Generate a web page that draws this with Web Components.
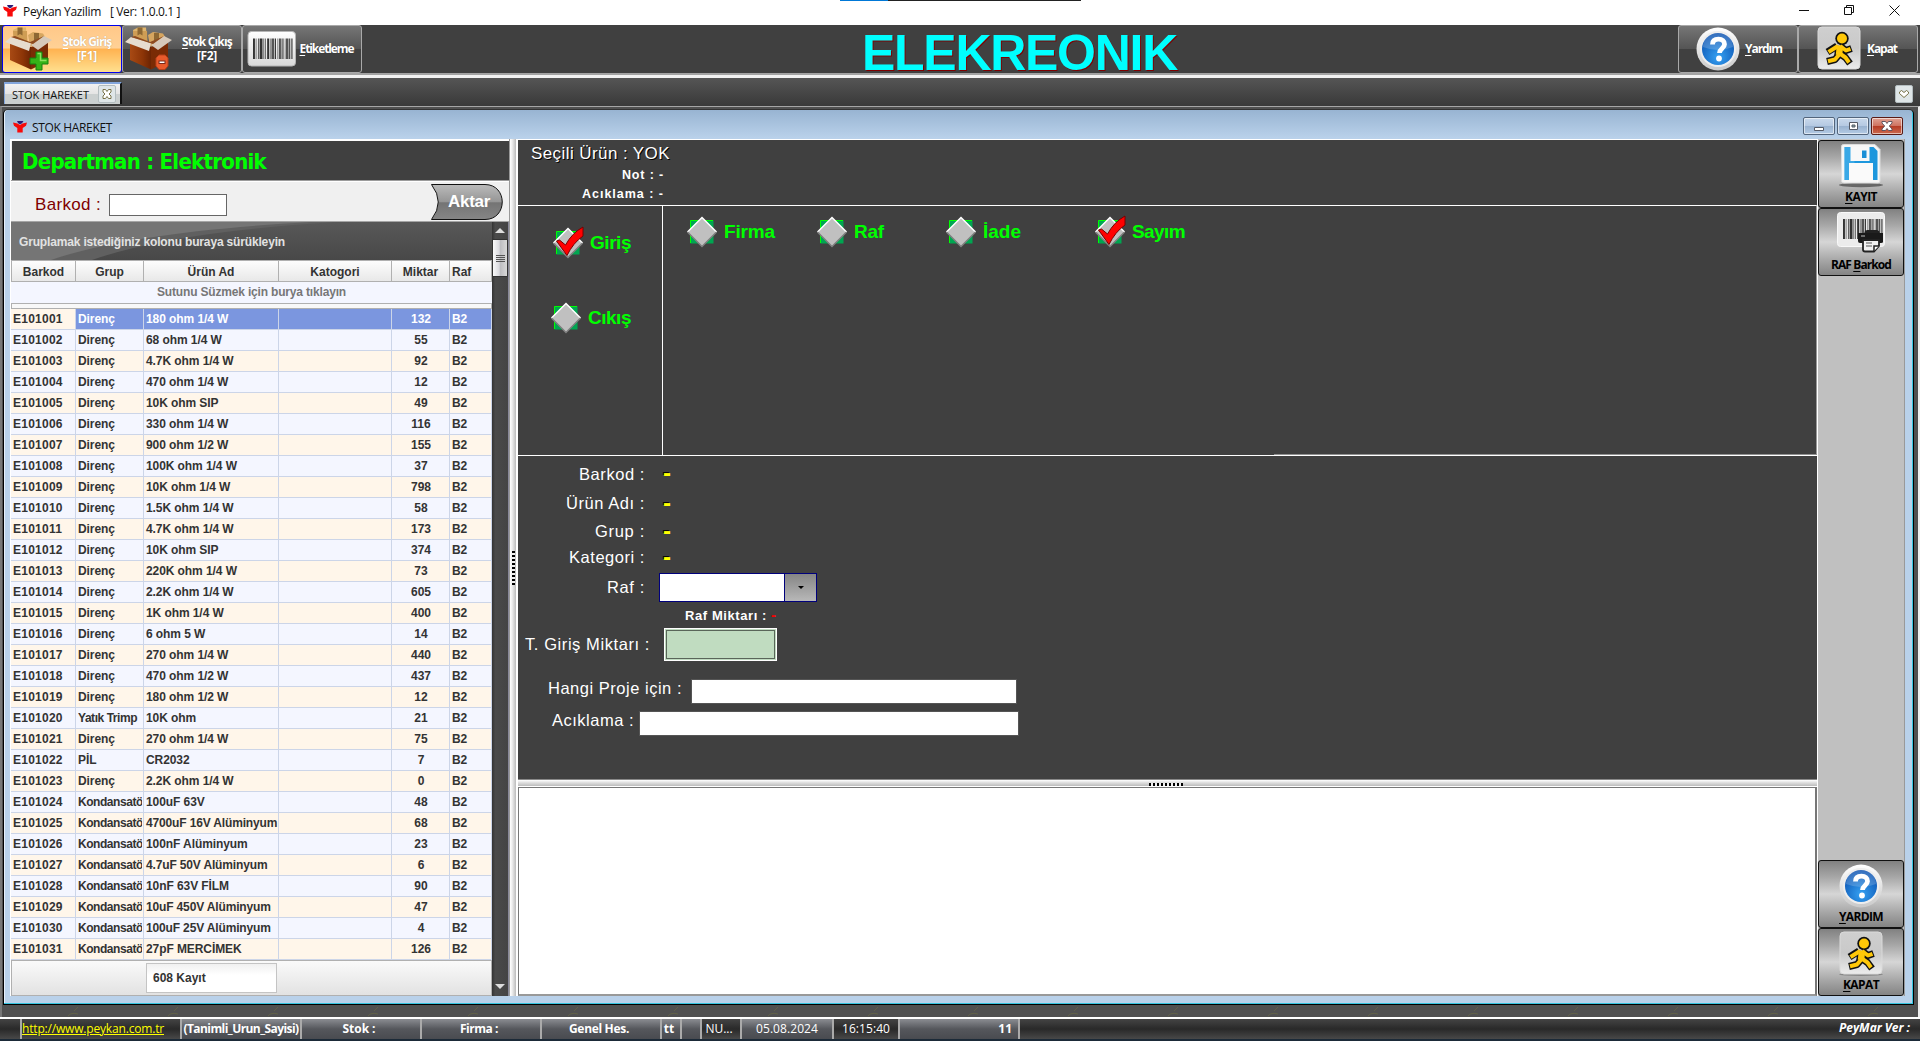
<!DOCTYPE html>
<html lang="tr">
<head>
<meta charset="utf-8">
<title>Peykan Yazilim</title>
<style>html,body{margin:0;padding:0;background:#fff;overflow:hidden}</style>
</head>
<body>
<stock-app></stock-app>
<script>
const fits = [];
function define(name, markup, init) {
  const tpl = document.createElement('template');
  tpl.innerHTML = '<style>*{box-sizing:border-box}:host{box-sizing:border-box}</style>' + markup;
  customElements.define(name, class extends HTMLElement {
    constructor() {
      super();
      this.attachShadow({ mode: 'open' }).appendChild(tpl.content.cloneNode(true));
    }
    connectedCallback() { if (init && !this.ready) { this.ready = true; init(this, this.shadowRoot); } }
  });
}

/* Text run spaced to a given width */
define('fit-text', `<style>:host{display:inline-block;white-space:pre;flex:none}::slotted(u){text-underline-offset:2px}</style><slot></slot>`,
  el => fits.push(el));

/* Icons */
const box = (badge) => `<svg width="48" height="44" viewBox="0 0 48 44">
<defs><linearGradient id="bx" x2="1" y2="0"><stop offset="0" stop-color="#a84a14"/><stop offset=".6" stop-color="#8d3507"/><stop offset="1" stop-color="#6b2403"/></linearGradient></defs>
<path d="M8 3l5-2.500 8 0 1 13-12 2z" fill="#dfb56e"/><path d="M8 4l14 0 .5 11-14 0z" fill="#cf9d54"/><path d="M12.500 .5h5v8l-2.500-1.500-2.500 1.500z" fill="#8e6833"/>
<path d="M23 8l5-3 10 1.500 3 5-1 7-15 1z" fill="#d6a660"/><path d="M29 6h5v8l-2.500-1.500-2.500 1.500z" fill="#8e6833"/>
<path d="M5 15l21 5v22.500L5 33z" fill="url(#bx)"/><path d="M26 20l17-5v19L26 42.500z" fill="#7a2b05"/>
<path d="M6 10l20 6 -2 8L0 15z" fill="#e6dccf"/><path d="M26 18l13-9 8 4-14 10z" fill="#d6c9ba"/><path d="M6 10l4-1 15 6 14-6-11 8z" fill="#8c4a20"/>${badge}</svg>`;
const bars = (x, y, h, s) => { let o = '', w = [2,1,1,3,1,1,2,1,3,1,1,2,1,1,3,1,2], p = x;
  w.forEach((k, i) => { o += `<rect x="${p}" y="${y}" width="${k*s}" height="${h}" fill="${['#333','#777','#555'][i%3]}"/>`; p += (k + (i%4==1?1.400:.7)) * s; }); return o; };
const ICONS = {
  boxadd: box('<path d="M31 25.500h6v6h6v6h-6v6h-6v-6h-6v-6h6z" transform="translate(0,-.5)" fill="#35b318" stroke="#168010"/><path d="M32.500 26.500h3v7h6" fill="none" stroke="#8de05f" stroke-width="1.500"/>'),
  boxdel: box('<path d="M34 28h6l3 3v8l-3 3.500h-6L31 39v-8z" fill="#e85a2b" stroke="#b7401b"/><path d="M33.500 33.500h7v3.500h-7z" fill="#7b2a1c"/><path d="M34.500 34.500h5v1.500h-5z" fill="#fff"/>'),
  barcode: `<svg width="50" height="38" viewBox="0 0 50 38"><defs><linearGradient id="g" x2="0" y2="1"><stop stop-color="#fff"/><stop offset="1" stop-color="#d9d9d9"/></linearGradient></defs><rect x="1" y="1.500" width="47.500" height="34.500" rx="3.500" fill="url(#g)" stroke="#b5b5b5"/>${bars(6,8.500,20.500,.97)}</svg>`,
  help: `<svg width="44" height="44" viewBox="0 0 44 44"><defs><linearGradient id="r" x2="0" y2="1"><stop stop-color="#fff"/><stop offset="1" stop-color="#c9c9c9"/></linearGradient><radialGradient id="h" cx=".5" cy=".75" r=".75"><stop stop-color="#35a1f2"/><stop offset="1" stop-color="#0a4fae"/></radialGradient></defs><circle cx="22" cy="22" r="21.500" fill="url(#r)"/><circle cx="22" cy="22" r="18" fill="#eee"/><circle cx="22" cy="22" r="16" fill="url(#h)"/><path d="M7 20a15 14.500 0 0 1 30 0q-15 6-30 0" fill="#fff" opacity=".18"/><path d="M16.500 17.500c0-4 2.500-5.300 6-5.300 3.800 0 6 2 6 5.100 0 4.300-5 4.200-5 8.700" fill="none" stroke="#fff" stroke-width="4.800"/><circle cx="23" cy="31.500" r="2.900" fill="#fff"/></svg>`,
  run: `<svg width="46" height="46" viewBox="0 0 46 46"><defs><linearGradient id="q" x2="0" y2="1"><stop stop-color="#cfcfcf"/><stop offset=".5" stop-color="#c9c9c9"/><stop offset="1" stop-color="#ececec"/></linearGradient></defs><ellipse cx="23" cy="43.500" rx="22" ry="1.500" fill="#000" opacity=".25"/><rect x="2" y="1" width="42" height="42" rx="4" fill="url(#q)" stroke="#dadada"/>
<g stroke-linejoin="round"><path d="M21 20L11.500 26M24 20l6 4.500 5.500-2M24.500 27l-5.500 6.500-8 2M23 27l6.500 4.500 4.500 6" fill="none" stroke="#111" stroke-width="7"/><path d="M24 20l-1 10" stroke="#111" stroke-width="9.500"/><circle cx="26" cy="12.500" r="6.700" fill="#111"/><path d="M22 20L12.500 26M24 20l6 4.500 4.500-1.700M24.500 27l-5.500 6.500-7 1.800M23 27l6.500 4.500 3.500 5" fill="none" stroke="#ffc808" stroke-width="4"/><path d="M24 19.500l-1 9.500" stroke="#ffc808" stroke-width="6.500"/><circle cx="26" cy="12.500" r="5" fill="#ffc808"/></g></svg>`,
  save: `<svg width="46" height="46" viewBox="0 0 46 46"><ellipse cx="23" cy="42" rx="22" ry="2.200" fill="#222" opacity=".55"/><path d="M3.500 3.500Q3.500 1.500 5.500 1.500H37l5 5V38q0 2-2 2H6q-2.500 0-2.500-2z" fill="#f6f6f6" stroke="#ddd"/><path d="M6.500 4h29l4 4v29h-33z" fill="#1d97dd"/><path d="M6.500 4h10v33h-10z" fill="#55b9ef" opacity=".5"/><path d="M12.500 4h19v14h-19z" fill="#f8f8f8"/><path d="M24 7.500h4.500v7.500H24z" fill="#1a8fd6"/><path d="M11 20h24v17.500H11z" fill="#fafafa"/></svg>`,
  print: `<svg width="48" height="42" viewBox="0 0 48 42"><rect x=".5" y=".5" width="47" height="34" rx="3" fill="#ececec" stroke="#f8f8f8"/>${bars(6,7,20,.97)}<path d="M28 19l2-1h10l2 1 1 3h-16z" fill="#222"/><path d="M21 21h25v9q0 1-2 1H23q-2 0-2-2z" fill="#1a1a1a"/><path d="M24 24h4" stroke="#888" stroke-width="1.500"/><path d="M26 28h16v6l-5 5.500H28q-2 0-2-2z" fill="#f2f2f2" stroke="#222" stroke-width="1.800"/><path d="M29 31h6M29 34h6" stroke="#555"/><path d="M37 39v-5h5" fill="#fff" stroke="#222" stroke-width="1.500"/></svg>`
};
define('app-icon', `<style>:host{display:block;flex:none;line-height:0}</style><span></span>`, (el, r) => r.querySelector('span').innerHTML = ICONS[el.getAttribute('name')]);

define('brand-mark', `<style>:host{display:block;flex:none;line-height:0}</style>
<svg width="14" height="12" viewBox="0 0 14 12"><path d="M0 1.500l4.500 1 2.500 1.500 2.500-1.500L14 1.500l-1 3.300-3.300 2.200V11.500H4.300V7L1 4.800z" fill="#f80a0a"/><path d="M4 0h6.500L9 2.200 7 3.300 5.200 2.200z" fill="#2b1b78"/></svg>`);

define('title-bar', `<style>
:host{display:flex;height:25px;background:#fff;flex-direction:column;font:12px "Open Sans",sans-serif;color:#111}
.t{height:1px;display:flex;padding-left:840px}.t i{width:48px;background:#0078d7}.t b{width:193px;background:#222}
.r{flex:1;display:flex;align-items:flex-start;padding-left:3px;position:relative}
brand-mark{margin-top:4px}.x{margin:2px 0 0 6px;line-height:18px}.v{margin:2px 0 0 9px;line-height:18px}
svg{margin-left:auto}</style>
<div class="t"><i></i><b></b></div><div class="r"><brand-mark></brand-mark><fit-text class="x" w="78">Peykan Yazilim</fit-text><fit-text class="v" w="70">[ Ver: 1.0.0.1 ]</fit-text>
<svg width="122" height="22" fill="none" stroke="#111"><path d="M1 9.500h10M46.500 6.500h7v7h-7zM48.500 6.500v-2h7v7h-2M91.500 4.500l10 10M101.500 4.500l-10 10"/></svg></div>`);

define('tool-button', `<style>
:host{display:flex;align-items:center;width:120px;height:48px;border:1px solid #a9a9a9;border-radius:3px;background:linear-gradient(#767676,#555 49%,#404040 50%,#404040);color:#fff;font:bold 12px/14px "Open Sans",sans-serif;text-shadow:0 0 1px #0005}
:host([active]){border-color:#00e;background:linear-gradient(#ffc888,#ffd196 48%,#ffb250 50%,#ffe08f)}
.l{flex:1;text-align:center;line-height:14px}</style><slot name="icon"></slot><div class="l"><slot></slot></div>`);

define('tool-bar', `<style>
:host{display:flex;height:53px;background:#404040;border-bottom:3px solid #f2f2f2;padding:0 2px;box-shadow:inset 0 -2px #a3a3a3}
h1{margin:0;flex:1;font:bold 50px/50px "Liberation Sans",sans-serif;color:#0ff;text-shadow:1px 1px #800000;padding:3px 0 0 500px;height:48px}
.a{margin-left:2px}.b{margin-left:4px}.c{margin-left:6px}.d{margin-left:17px}tool-button{flex:none}</style>
<tool-button active><app-icon class="a" slot="icon" name="boxadd"></app-icon><fit-text w="49"><u>S</u>tok Giriş</fit-text><br><fit-text w="20">[F1]</fit-text></tool-button>
<tool-button><app-icon class="a" slot="icon" name="boxdel"></app-icon><fit-text w="50"><u>S</u>tok Çıkış</fit-text><br><fit-text w="20">[F2]</fit-text></tool-button>
<tool-button><app-icon class="b" slot="icon" name="barcode"></app-icon><fit-text w="54" style="margin-right:5px"><u>E</u>tiketleme</fit-text></tool-button>
<h1><fit-text w="315">ELEKREONIK</fit-text></h1>
<tool-button><app-icon class="d" slot="icon" name="help"></app-icon><fit-text w="37" style="margin-right:10px"><u>Y</u>ardım</fit-text></tool-button>
<tool-button><app-icon class="d" slot="icon" name="run"></app-icon><fit-text w="30" style="margin-right:15px"><u>K</u>apat</fit-text></tool-button>`);

define('mini-button', `<style>:host{display:flex;width:18px;height:18px;flex:none;border:1px solid #b3bdc0;border-radius:2px;background:#dfe6e8;align-items:center;justify-content:center}svg{display:block}</style>
<svg width="12" height="12" fill="#fff" stroke="#6b6437" stroke-width=".9"><path/></svg>`, (el, r) => r.querySelector('path').setAttribute('d', el.hasAttribute('close') ? 'M2 1.500h2.500L6 3.500l1.500-2H10V4L8 6l2 2v2.500H7.500L6 8.500l-1.500 2H2V8l2-2-2-2z' : 'M1.500 4l2-1.500L6 4.500l2.500-2 2 1.500v1.500L6 9.500 1.500 5.500z'));

define('tab-strip', `<style>
:host{display:flex;height:28px;background:linear-gradient(#555,#393939);align-items:flex-start;justify-content:space-between;padding:4px 7px 0 4px}
.tab{display:flex;align-items:center;width:118px;height:22px;border:1px solid #83a6dc;border-right:2px solid #111;border-bottom:0;border-top-width:2px;background:linear-gradient(#f2f2f2,#e4e4e4 50%,#cbd0d0 52%,#cbd0d0);padding:1px 4px 1px 7px;justify-content:space-between;font:11px "Open Sans",sans-serif;color:#111}
.m{margin-top:3px}</style>
<div class="tab"><fit-text w="77">STOK HAREKET</fit-text><mini-button close></mini-button></div><mini-button class="m"></mini-button>`);

define('window-buttons', `<style>:host{display:flex;gap:2px}
i{width:32px;height:18px;border:1px solid #53657c;border-radius:2px;background:linear-gradient(#c9d9ec,#b5c9e2 48%,#98b1cf 50%,#b4cbe5);box-shadow:inset 0 0 0 1px #ffffff90;display:flex;align-items:center;justify-content:center}
i.x{border-color:#5a1a14;background:linear-gradient(#e0a294,#cf7361 48%,#b53a24 50%,#cc6a50)}</style>
<i><svg width="12" height="12"><path d="M1.500 7.500h9v3h-9z" fill="#fff" stroke="#555a66"/></svg></i>
<i><svg width="12" height="12"><path d="M2.500 2.500h8v7h-8z" fill="#fff" stroke="#555a66"/><path d="M5 5h3v2H5z" fill="#8aa" stroke="#555a66"/></svg></i>
<i class="x"><svg width="14" height="12"><path d="M2 1.500h3.500L7 3.500l1.500-2H12V3L9.300 6 12 9v1.500H8.500L7 8.500l-1.500 2H2V9l2.700-3L2 3z" fill="#fff" stroke="#554c58" stroke-width=".9"/></svg></i>`);

const PRODUCTS = ['180 ohm 1/4 W|132','68 ohm 1/4 W|55','4.7K ohm 1/4 W|92','470 ohm 1/4 W|12','10K ohm SIP|49','330 ohm 1/4 W|116','900 ohm 1/2 W|155','100K ohm 1/4 W|37','10K ohm 1/4 W|798','1.5K ohm 1/4 W|58','4.7K ohm 1/4 W|173','10K ohm SIP|374','220K ohm 1/4 W|73','2.2K ohm 1/4 W|605','1K ohm 1/4 W|400','6 ohm 5 W|14','270 ohm 1/4 W|440','470 ohm 1/2 W|437','180 ohm 1/2 W|12','10K ohm|21|Yatık Trimp','270 ohm 1/4 W|75','CR2032|7|PİL','2.2K ohm 1/4 W|0','100uF 63V|48|K','4700uF 16V Alüminyum|68|K','100nF Alüminyum|23|K','4.7uF 50V Alüminyum|6|K','10nF 63V FİLM|90|K','10uF 450V Alüminyum|47|K','100uF 25V Alüminyum|4|K','27pF MERCİMEK|126|K'];

define('product-grid', `<style>
:host{display:flex;height:775px;border-top:1px solid #a5a5a5;font:bold 12px "Liberation Sans",sans-serif;color:#333}
.main{width:481px;flex:none}
.grp{height:38px;line-height:40px;padding-left:8px;color:#e2e2e2;background:linear-gradient(#585858,#484848);display:grid;justify-items:start}
.grp>*{grid-area:1/1}.grp svg{margin-left:-8px}
.row{display:grid;grid-template-columns:65px 68px 135px 113px 58px 42px;height:21px}
.row>*{border-right:1px solid #ccd5e8;border-bottom:1px solid #ccd5e8;line-height:21px;padding:0 1px 0 2px;overflow:hidden;white-space:pre;letter-spacing:-.08px}
.row>:first-child{padding-left:2px;letter-spacing:.25px}
.row>:nth-child(2)>span{display:block;overflow:hidden}.row .k{letter-spacing:-.45px}
.row>:nth-child(5){text-align:center;padding-left:2px;letter-spacing:0}
.row:nth-child(even)>*{background:#f4f6ff}.row:nth-child(odd)>*{background:#fff6ea}
.row.sel>*{background:#7b96df;color:#fff}.row.sel>:first-child{background:#fff6ea;color:#333}
.head{height:22px;border-top:1px solid #b0b0b0;border-left:1px solid #b0b0b0;grid-template-columns:64px 68px 135px 113px 58px 42px}
.head>*,.head>:first-child{background:linear-gradient(#fdfdfd,#e8e8e8)!important;text-align:center;border-color:#b0b0b0;line-height:22px;letter-spacing:0;padding:0 2px}.head>:last-child{text-align:left;padding-left:2px}
.filter{height:21px;background:#f4f6ff;color:#777;text-align:center;line-height:21px}
.sep{height:6px;border:1px solid #b0b0b0;background:#f8f8f8}
.foot{height:36px;border:1px solid #b0b0b0;background:linear-gradient(#fafafa,#e2e2e2);padding:2px 0 0 134px}
.foot div{width:131px;height:30px;border:1px solid #c4c4c4;background:linear-gradient(#f0f0f0,#fff 40%);padding-left:6px;line-height:29px}
.bar{width:18px;background:linear-gradient(90deg,#333,#4a4a4a 20%,#444);display:flex;flex-direction:column;align-items:center;border-right:1px solid #889}
.up,.dn{width:0;height:0;border:5px solid transparent}.up{border-bottom-color:#ddd;margin-top:1px}.dn{border-top-color:#ddd;margin:auto 0 2px}
.thumb{margin-top:6px;width:16px;height:38px;border:1px solid #333;border-radius:1px;background:linear-gradient(90deg,#fafafa,#d9d9de 45%,#bcbcc0 50%,#d8d8d8);display:flex;flex-direction:column;gap:1px;align-items:center;justify-content:center}
.thumb i{width:9px;height:1px;background:#555}</style>
<div class="main"><div class="grp"><svg width="481" height="38"><path d="M0 0H325Q160 10 81 38H0z" fill="#606060"/><path d="M0 0H300Q120 10 40 38H0z" fill="#757575"/></svg><fit-text w="266">Gruplamak istediğiniz kolonu buraya sürükleyin</fit-text></div>
<div class="row head"><span>Barkod</span><span>Grup</span><span>Ürün Ad</span><span>Katogori</span><span>Miktar</span><span>Raf</span></div>
<div class="filter"><fit-text w="189">Sutunu Süzmek için burya tıklayın</fit-text></div><div class="sep"></div><div class="rows"></div>
<div class="foot"><div>608 Kayıt</div></div></div>
<div class="bar"><div class="up"></div><div class="thumb"><i></i><i></i><i></i><i></i></div><div class="dn"></div></div>`, (el, r) => {
  r.querySelector('.rows').innerHTML = PRODUCTS.map((p, i) => {
    let [name, qty, g = 'Direnç'] = p.split('|'); if (g === 'K') g = 'Kondansatö';
    return `<div class="row${i ? '' : ' sel'}"><span>E1010${String(i + 1).padStart(2, '0')}</span><span><span class="${g.length > 8 ? 'k' : ''}">${g}</span></span><span${name.length > 18 ? ' style="letter-spacing:-.15px"' : ''}>${name}</span><span></span><span>${qty}</span><span>B2</span></div>`;
  }).join('');
});

define('stock-list', `<style>
:host{display:flex;flex-direction:column;width:499px;flex:none;border-left:1px solid #fff;border-top:2px solid #fff;background:#f0f0f0}
.dep{height:39px;background:#404040;color:#0f0;font:bold 22px/42px "DejaVu Sans Condensed","DejaVu Sans",sans-serif;font-stretch:condensed;padding-left:10px;margin-left:1px}
.scan{height:41px;border-top:1px solid #9c9c9c;box-shadow:inset 0 1px #fff;display:flex;align-items:center;padding:8px 6px 0 24px;font:17px "Liberation Sans",sans-serif;color:#800000}
.in{width:118px;height:22px;border:1px solid #666;background:#fff;margin-left:8px}
.btn{margin:-7px 0 0 auto;display:grid;place-items:center;width:72px;height:36px;font:bold 17px "Liberation Sans",sans-serif;color:#fff}.btn>*{grid-area:1/1}.btn fit-text{padding-left:4px}</style>
<div class="dep"><fit-text w="244">Departman : Elektronik</fit-text></div>
<div class="scan"><fit-text w="66">Barkod :</fit-text><div class="in"></div>
<div class="btn"><svg width="72" height="36"><defs><linearGradient id="a" x2="0" y2="1"><stop stop-color="#bbb"/><stop offset=".5" stop-color="#959595"/><stop offset=".52" stop-color="#747474"/><stop offset="1" stop-color="#868686"/></linearGradient></defs><path d="M.5 .5H54C77 .5 77 35.500 54 35.500H.5Q14 18 .5 .5z" fill="url(#a)" stroke="#111"/></svg><fit-text w="42">Aktar</fit-text></div></div>
<product-grid></product-grid>`);

define('check-item', `<style>:host{display:flex;align-items:center;gap:7px;font:bold 19px/30px "Liberation Sans",sans-serif;color:#0f0;flex:none}svg{flex:none;overflow:visible}.c{display:none}:host([checked]) .c{display:block}</style>
<svg width="30" height="30"><path d="M3.500 3.500h23v23h-23z" fill="#00a651"/><path d="M3.500 26V3.500H26" fill="none" stroke="#0f0"/><path d="M15 .5L.5 15 15 29.500 29.500 15z" fill="#c0c0c0"/><path d="M.5 15L15 .5 29.500 15" fill="none" stroke="#fff" stroke-width="1.500"/><path d="M.5 15L15 29.500 29.500 15" fill="none" stroke="#808080" stroke-width="1.500"/><path class="c" d="M3.500 13l3-1 6 5Q19 5 30-1v9Q20 15 14 27.500z" fill="#f00" stroke="#700" /></svg><slot></slot>`);

define('form-row', `<style>:host{display:flex;align-items:center;height:var(--h);color:#fff;font:16.500px "Liberation Sans",sans-serif}.l{width:var(--l,127px);text-align:right;flex:none;margin-top:-1px}</style><div class="l"><slot name="label"></slot></div><slot></slot>`);

define('stock-form', `<style>
:host{display:flex;flex-direction:column;width:1300px;flex:none;border-left:1px solid #fff;border-top:1px solid #fff;background:#404040;color:#fff;font-family:"Liberation Sans",sans-serif}
.info{height:65px;padding:3px 0 0 13px}.info div{display:flex;justify-content:flex-end;width:133px;font:bold 12.500px/19px "Liberation Sans",sans-serif;white-space:pre}
.info .n{font:17px/22px "Liberation Sans",sans-serif;text-shadow:1px 1px #000;width:139px;height:23px}
.modes{display:flex;height:250px;border-top:1px solid #fff;border-right:1px solid #999}
.io{width:145px;border-right:1px solid #fff;padding:22px 0 0 35px;display:flex;flex-direction:column;gap:45px}.io>:last-child{margin-left:-2px}
.ty{display:flex;padding:11px 0 0 24px;align-items:flex-start}
.ty>*{width:130px}.ty>:nth-child(2){width:129px}.ty>:nth-child(3){width:149px}.rule{height:1px;background:#909090;margin:-1px 0 0 756px}
.form{height:324px;border-top:1px solid #fff}
.y{color:#ff0;font-size:24px;font-weight:bold;line-height:18px;text-shadow:-1px -1px #000;margin:-3px 0 0 18px}
.cb{display:flex;width:158px;height:29px;border:1px solid #00007c;background:#fff;margin:-1px 0 0 14px;justify-content:flex-end}
.cb i{width:32px;border-left:1px solid #00007c;background:linear-gradient(#858585,#b8b8b8);display:flex;align-items:center;justify-content:center}
.cb i::before{content:"";border:3px solid transparent;border-top-color:#000;margin-top:3px}
.g{width:113px;height:33px;background:#c0dcc0;border:1px solid #fff;box-shadow:inset 0 0 0 1px #c0dcc0,inset 0 0 0 2px #596659;margin:-2px 0 0 14px}
.in{height:25px;background:#fff;border:1px solid #555;margin-top:5px}
.sm{font-size:13px;font-weight:bold}.red{color:#f00;margin-left:4px;font:bold 15px/16px "Liberation Sans",sans-serif}
.split{height:8px;flex:none;border-top:1px solid #888;background:linear-gradient(#fff,#ddd 40%,#c0c0c0 80%,#fff 81%);display:flex;padding:3px 0 0 631px}
.split i{width:34px;height:3px;background:repeating-linear-gradient(90deg,#000 0 2px,#eee 2px 4px)}
.out{height:209px;background:#fff;border:1px solid #777;border-right-width:2px;border-bottom:2px solid #999}</style>
<div class="info"><div class="n"><fit-text w="139">Seçili Ürün : YOK</fit-text></div><div><fit-text w="42">Not : -</fit-text></div><div><fit-text w="82">Acıklama : -</fit-text></div></div>
<div class="modes"><div class="io"><check-item checked><fit-text w="41">Giriş</fit-text></check-item><check-item><fit-text w="43">Cıkış</fit-text></check-item></div>
<div class="ty"><check-item><fit-text w="51">Firma</fit-text></check-item><check-item><fit-text w="30">Raf</fit-text></check-item><check-item><fit-text w="38">İade</fit-text></check-item><check-item checked><fit-text w="53">Sayım</fit-text></check-item></div></div><div class="rule"></div>
<div class="form">
<form-row style="--h:37px"><fit-text slot="label" w="66">Barkod :</fit-text><span class="y">-</span></form-row>
<form-row style="--h:22px"><fit-text slot="label" w="79">Ürün Adı :</fit-text><span class="y">-</span></form-row>
<form-row style="--h:34px"><fit-text slot="label" w="50">Grup :</fit-text><span class="y">-</span></form-row>
<form-row style="--h:18px"><fit-text slot="label" w="76">Kategori :</fit-text><span class="y">-</span></form-row>
<form-row style="--h:42px"><fit-text slot="label" w="38">Raf :</fit-text><div class="cb"><i></i></div></form-row>
<form-row style="--h:12px;--l:249px"><fit-text class="sm" slot="label" w="82">Raf Miktarı :</fit-text><span class="red">-</span></form-row>
<form-row style="--h:48px;--l:132px"><fit-text slot="label" w="125">T. Giriş Miktarı :</fit-text><div class="g"></div></form-row>
<form-row style="--h:39px;--l:164px"><fit-text slot="label" w="134">Hangi Proje için :</fit-text><div class="in" style="width:326px;margin-left:9px"></div></form-row>
<form-row style="--h:26px;--l:116px"><fit-text slot="label" w="82">Acıklama :</fit-text><div class="in" style="width:380px;margin-left:5px"></div></form-row></div>
<div class="split"><i></i></div><div class="out"></div>`);

define('side-button', `<style>:host{display:flex;flex-direction:column;align-items:center;justify-content:flex-end;height:68px;flex:none;border:1px solid #111;border-radius:3px;background:linear-gradient(#818181,#a8a8a8 25%,#d6d6d6 50%,#a6a6a6 78%,#848484);color:#000;font:bold 12px/15px "Open Sans",sans-serif;padding-bottom:3px}</style><slot></slot>`);
define('side-panel', `<style>:host{display:flex;flex-direction:column;width:88px;padding-top:1px;background:#c0c0c0;border-right:1px solid #999;border-left:1px solid #fff}.gap{flex:1}.p{margin-bottom:3px}.h{margin-bottom:1px}</style>
<side-button><app-icon name="save"></app-icon><fit-text w="32"><u>K</u>AYIT</fit-text></side-button>
<side-button><app-icon class="p" name="print"></app-icon><fit-text w="60">RAF <u>B</u>arkod</fit-text></side-button><div class="gap"></div>
<side-button><app-icon class="h" name="help"></app-icon><fit-text w="44"><u>Y</u>ARDIM</fit-text></side-button>
<side-button><app-icon name="run"></app-icon><fit-text w="36"><u>K</u>APAT</fit-text></side-button>`);

define('mdi-window', `<style>
:host{display:flex;flex-direction:column;width:1911px;height:896px;border:1px solid #000;border-top-color:#333;border-radius:5px 5px 0 0;background:linear-gradient(#98b4d2,#b9d1ea 28px);box-shadow:inset -1px -1px #35c5e0,inset 1px 0 #e6f0fa}
.t{height:29px;display:flex;align-items:center;padding:2px 10px 0 9px;font:12px "Open Sans",sans-serif;color:#111}.t fit-text{margin:3px 0 0 5px}.t brand-mark{margin-top:3px}
window-buttons{margin:1px 0 0 auto}
.b{display:flex;height:857px;padding-left:6px}
.split{width:8px;border-left:1px solid #999;background:linear-gradient(90deg,#fff,#eee 30%,#c0c0c0 80%,#fff 81%);display:flex;align-items:center}
.split i{width:3px;height:34px;margin:0 0 0 2px;background:repeating-linear-gradient(#000 0 2px,#eee 2px 4px)}</style>
<div class="t"><brand-mark></brand-mark><fit-text w="80">STOK HAREKET</fit-text><window-buttons></window-buttons></div>
<div class="b"><stock-list></stock-list><div class="split"><i></i></div><stock-form></stock-form><side-panel></side-panel></div>`);

define('status-cell', `<style>:host{display:flex;align-items:center;justify-content:center;height:20px;border-left:2px solid #aaa;background:linear-gradient(#8a8c91,#55575c 50%,#494b50);white-space:pre;overflow:hidden;padding-bottom:2px;flex:none}:host([dark]){background:linear-gradient(#444,#292929 50%,#484848)}</style><slot></slot>`);
define('status-bar', `<style>:host{display:flex;height:24px;border-top:2px solid #fff;border-bottom:2px solid #1b2a38;background:linear-gradient(#444,#292929 50%,#484848);color:#fff;font:bold 12px "Open Sans",sans-serif;padding-left:20px}
.link{color:#ff0;font-weight:normal;text-decoration:underline}.nb{font-weight:normal}.last{margin-left:auto;padding-right:10px;font-style:italic;line-height:18px}</style>
<status-cell dark style="width:160px;justify-content:flex-start"><fit-text class="link" w="142">http://www.peykan.com.tr</fit-text></status-cell>
<status-cell style="width:120px"><fit-text w="115">(Tanimli_Urun_Sayisi)</fit-text></status-cell>
<status-cell style="width:120px;padding-right:4px"><fit-text w="33">Stok :</fit-text></status-cell>
<status-cell style="width:120px;padding-right:4px"><fit-text w="38">Firma :</fit-text></status-cell>
<status-cell style="width:120px;padding-right:4px"><fit-text w="60">Genel Hes.</fit-text></status-cell>
<status-cell style="width:20px;padding-right:4px">tt</status-cell><status-cell style="width:20px"></status-cell>
<status-cell dark class="nb" style="width:40px;padding-right:4px">NU...</status-cell>
<status-cell class="nb" style="width:92px"><fit-text w="62">05.08.2024</fit-text></status-cell>
<status-cell dark class="nb" style="width:66px"><fit-text w="48">16:15:40</fit-text></status-cell>
<status-cell style="width:120px;justify-content:flex-end;padding-right:6px">11</status-cell><status-cell dark style="width:2px"></status-cell>
<fit-text class="last" w="71">PeyMar Ver :</fit-text>`);

define('stock-app', `<style>:host{display:flex;flex-direction:column;width:1920px;height:1041px;overflow:hidden}
.d{height:911px;border-top:1px solid #a5a5a5;border-right:2px solid #eee;border-left:2px solid #777;background:#505050;padding:2px 0 0 1px;display:flex;flex-direction:column}
.w{height:12px;display:block;margin-left:-3px}</style>
<title-bar></title-bar><tool-bar></tool-bar><tab-strip></tab-strip>
<div class="d"><mdi-window></mdi-window><svg class="w" width="1914" height="12"><defs><pattern id="p" width="100" height="12" patternUnits="userSpaceOnUse"><path d="M74 6l4-4M68 11q3-4 10-2" fill="none" stroke="#606046"/></pattern></defs><path d="M0 0h1914v12H0z" fill="url(#p)"/></svg></div>
<status-bar></status-bar>`);

for (const el of fits) {
  const target = +el.getAttribute('w'), text = el.textContent;
  const pad = parseFloat(getComputedStyle(el).paddingLeft) + parseFloat(getComputedStyle(el).paddingRight);
  const natural = el.getBoundingClientRect().width - pad;
  if (natural) el.style.letterSpacing = ((target - natural) / text.length).toFixed(3) + 'px';
}
</script>
</body>
</html>
